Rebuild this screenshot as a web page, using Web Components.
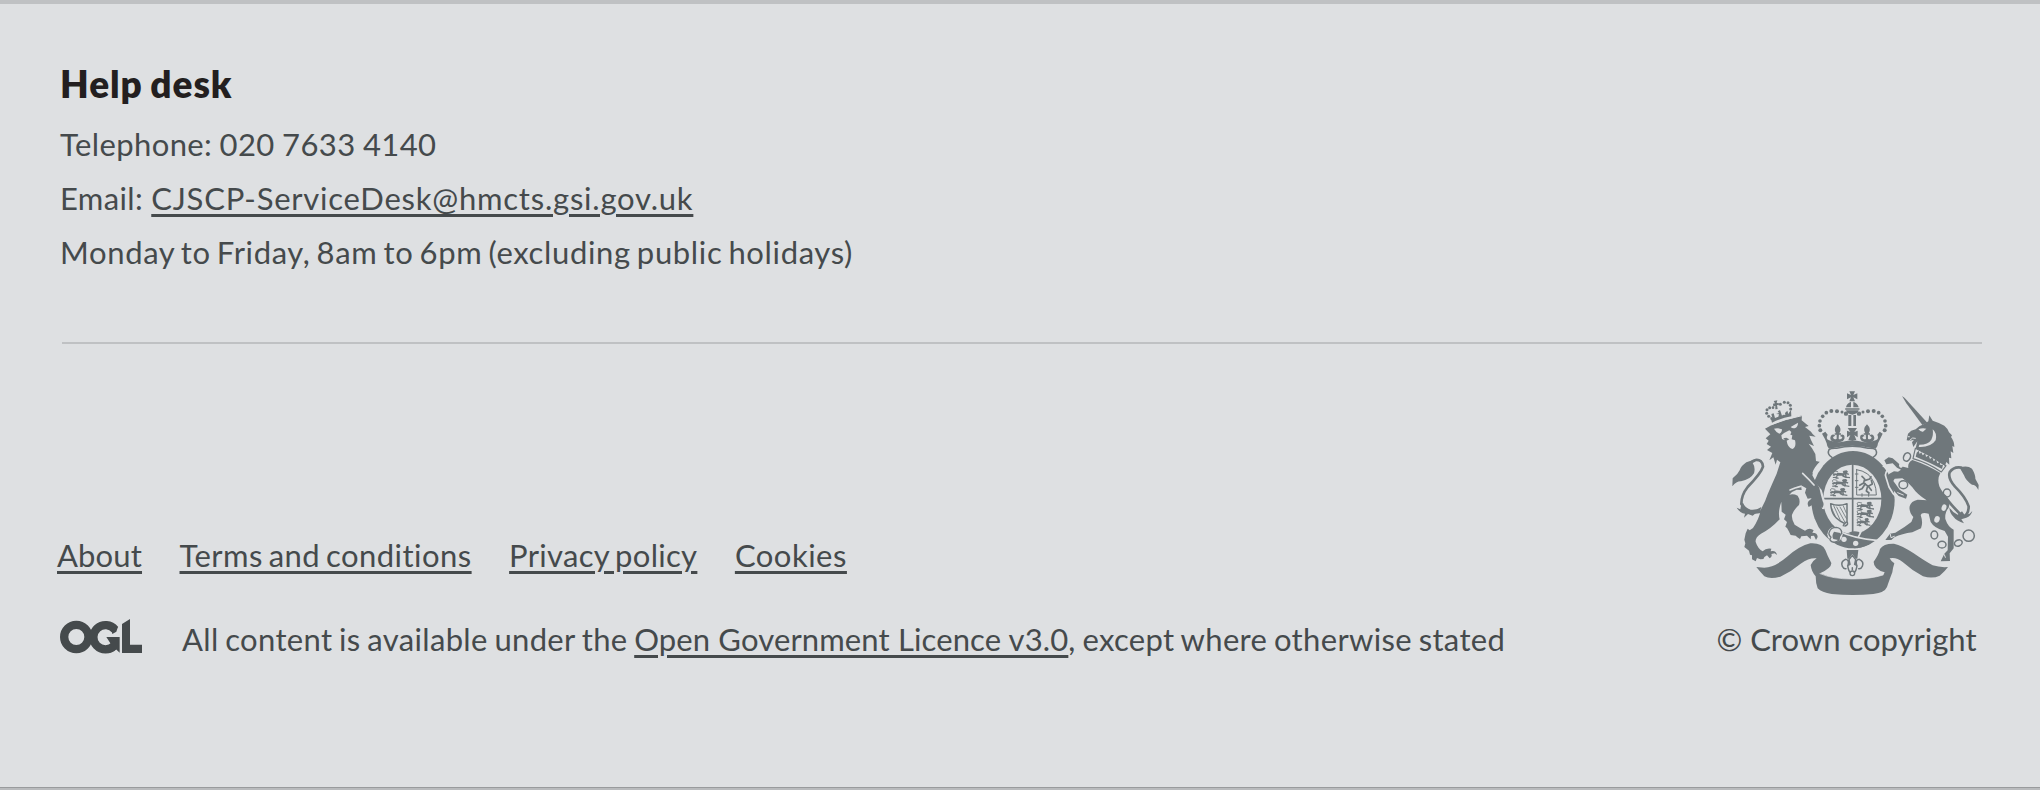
<!DOCTYPE html>
<html lang="en">
<head>
<meta charset="utf-8">
<title>Help desk</title>
<style>
  html, body { margin: 0; background: #dee0e2; }
  body { font: 31px/54px Lato, "Open Sans", sans-serif; color: #454a4c; }
</style>
</head>
<body>
<site-footer>
  <help-desk slot="help" heading="Help desk">
    <help-line style="letter-spacing:.4px;word-spacing:-1px">Telephone: 020 7633 4140</help-line>
    <help-line style="letter-spacing:.35px">Email: <text-link style="letter-spacing:.77px">CJSCP-ServiceDesk@hmcts.gsi.gov.uk</text-link></help-line>
    <help-line style="letter-spacing:.65px;word-spacing:-2.5px">Monday to Friday, 8am to 6pm (excluding public holidays)</help-line>
  </help-desk>
  <footer-links slot="meta">
    <text-link style="letter-spacing:.15px">About</text-link>
    <text-link style="letter-spacing:.45px;word-spacing:-2.5px">Terms and conditions</text-link>
    <text-link style="letter-spacing:.3px;word-spacing:-2.5px">Privacy policy</text-link>
    <text-link style="letter-spacing:.5px">Cookies</text-link>
  </footer-links>
  <licence-note slot="meta">All content is available under the <text-link style="letter-spacing:.13px;word-spacing:0">Open Government Licence v3.0</text-link>, except where otherwise stated</licence-note>
  <crown-copyright slot="copyright">© Crown copyright</crown-copyright>
</site-footer>

<template id="t-footer">
  <style>
    :host { display: flex; flex-direction: column; box-sizing: border-box; height: 790px;
      border-top: 4px solid #bfc1c3; background: #dee0e2; }
    .help { padding: 58px 0 63px 60px; }
    .lower { display: flex; justify-content: space-between; align-items: flex-end;
      margin: 0 58px 0 62px; border-top: 2px solid #bfc1c3; padding-top: 35px; }
    .meta { display: flex; flex-direction: column; gap: 30px; margin-left: -5px; }
    .end { margin-top: auto; height: 1px; border-bottom: 2px solid #b9bbbd; background: #999b9d; }
  </style>
  <div class="help"><slot name="help"></slot></div>
  <div class="lower">
    <div class="meta"><slot name="meta"></slot></div>
    <slot name="copyright"></slot>
  </div>
  <div class="end"></div>
</template>

<template id="t-help">
  <style>
    :host { display: block; }
    h2 { margin: 0 0 11px; font-size: 37px; line-height: 44px; font-weight: 800; letter-spacing: .95px; word-spacing: -2px; color: #231f20; }
  </style>
  <h2></h2><slot></slot>
</template>

<template id="t-logo">
  <style>:host { display: block; width: 82px; height: 35px; } svg { display: block; }</style>
  <svg width="82" height="35" viewBox="0 0 246 105" role="img">
    <g fill="none" stroke="#454a4c" stroke-width="25">
      <circle cx="49" cy="54" r="36.500"/>
      <path d="M165 32 A36.500 36.500 0 1 0 163 80"/>
    </g>
    <path fill="#454a4c" d="M139 54H179V101L168 91Q160 98 151 101L140 87Q149 84 153 76ZM186 15L210 0V77H246V102H186ZM155 36L174 23L169 38L157 45Z"/>
  </svg>
</template>

<template id="t-licence">
  <style>
    :host { display: flex; align-items: flex-start; white-space: nowrap; }
    ogl-logo { margin: 7px 40px 0 3px; }
    span { letter-spacing: .34px; word-spacing: -1.6px; }
  </style>
  <ogl-logo></ogl-logo><span><slot></slot></span>
</template>

<template id="t-crown">
  <style>
    :host { display: flex; flex-direction: column; align-items: center; width: 290px; margin-right: -18px; gap: 3px; }
    span { white-space: nowrap; margin-left: -17px; }
  </style>
  <royal-arms></royal-arms>
  <span><slot></slot></span>
</template>

<template id="t-arms">
  <style>
    :host { display: block; width: 290px; height: 230px; }
    svg { display: block; }
    .f { fill: #6f777b; } .b { fill: #dee0e2; }
    .s { fill: none; stroke: #6f777b; stroke-linecap: round; stroke-linejoin: round; }
    .k { fill: none; stroke: #dee0e2; stroke-linecap: round; stroke-linejoin: round; }
  </style>
  <svg width="290" height="230" viewBox="0 0 870 690">
    <defs>
      <g id="beast">
        <path class="f" d="M2 12L8 9L12 10L15 7L34 9L37 12L36 16L42 19L40 23L31 19L29 16L18 16L13 20L19 22V25H10L9 21L13 16L10 14L5 17L1 15ZM31 4L34 1L43 0L47 4L44 8L50 10L49 14L42 12L43 19L53 20V24L40 22L37 12L34 10ZM1 20L10 19V23H2Z"/>
        <path class="s" stroke-width="2.500" d="M4 10Q-1 2 8 2L16 4"/>
      </g>
      <g id="sidefleur">
        <path class="f" d="M383 136Q397 150 388 163H378Q369 150 383 136ZM380 164H387L386 179Q391 184 397 176Q395 170 390 172Q394 163 402 169Q407 179 398 187L383 191L368 188Q357 180 363 170Q370 163 376 171Q371 170 369 176Q374 184 380 179ZM374 163H393V167H374Z"/>
      </g>
    </defs>

    <!-- ribbon -->
    <path class="f" d="M139 564L163 566Q195 565 233 532Q268 501 301 493Q337 491 346 513Q352 530 364 552Q365 567 330 583Q370 601 427 600Q481 601 520 588L524 580Q490 571 491 548Q507 526 510 510Q521 493 552 494Q576 499 611 523Q644 546 668 559Q690 566 714 564Q705 577 689 590Q668 600 639 592Q607 575 578 549Q558 533 539 538Q544 548 553 553Q549 565 547 580Q536 609 531 624Q524 641 490 645Q430 651 365 645Q335 641 323 628Q317 613 317 592Q304 577 302 558Q306 547 320 538Q299 535 272 554Q245 577 211 593Q181 602 163 592Q151 579 139 564Z"/>
    <path class="k" stroke-width="2" d="M330 584Q367 600 427 600Q483 600 519 588"/>

    <!-- crown -->
    <path class="f" d="M418 37H435L430 48L442 43V61L430 55L435 67H418L423 55L411 61V43L423 48ZM408 85Q410 73 423 68V85ZM430 68Q443 73 446 85H430ZM408 94L446 94Q443 105 427 107Q411 105 408 94ZM415 108H424V141H415ZM430 108H438V141H430ZM413 147H441L433 159L443 155V175L433 168L439 183H415L421 168L411 175V155L421 159Z"/>
    <path class="s" stroke-width="4" d="M407 90H447"/>
    <g class="f" id="beads">
      <circle cx="408" cy="104" r="6.500"/><circle cx="396" cy="99" r="4.500"/><circle cx="381" cy="97" r="6"/><circle cx="364" cy="96" r="6"/><circle cx="349" cy="101" r="5.500"/><circle cx="338" cy="112" r="5.500"/><circle cx="330" cy="126" r="5.500"/><circle cx="328" cy="140" r="5.500"/><circle cx="331" cy="154" r="6"/>
    </g>
    <use href="#beads" transform="matrix(-1 0 0 1 855 0)"/>
    <use href="#sidefleur"/><use href="#sidefleur" transform="matrix(-1 0 0 1 854 0)"/>
    <path class="f" d="M336 164L346 158L353 167Q346 180 357 184Q383 194 405 187L427 183L449 187Q471 194 497 184Q508 180 502 167L509 158L518 164Q509 182 504 193Q504 201 497 209Q463 202 427 200Q391 202 357 209Q350 201 350 193Q345 178 336 164Z"/>
    <path class="s" stroke-width="4.500" d="M366 235Q350 226 357 212Q363 207 380 208Q427 195 474 208Q491 207 497 212Q505 226 489 235"/>

    <!-- garter and shield -->
    <ellipse class="f" cx="429" cy="362" rx="125" ry="146"/>
    <ellipse class="b" cx="427" cy="361" rx="87" ry="104"/>
    <path class="s" stroke-width="5" stroke-linecap="butt" d="M428 257V466M340 359H514"/>
    <g>
      <use href="#beast" x="367" y="274"/><use href="#beast" x="365" y="300"/><use href="#beast" x="359" y="327"/>
      <use href="#beast" x="439" y="368"/><use href="#beast" x="439" y="392"/><use href="#beast" transform="translate(439 417) scale(.8 1)"/>
    </g>
    <path class="s" stroke-width="3" d="M440 272V348H499Q499 308 473 285Q457 274 440 272ZM436 285H444M436 305H444M436 325H444M456 344V352M476 344V352"/>
    <path class="s" stroke-width="5" d="M456 292L464 300L461 312L475 322L484 334M461 312L449 319M466 314L456 329L448 332M473 321L469 336L477 342M466 304L479 300L483 293M475 322L487 315L484 304"/>
    <path class="s" stroke-width="4.500" d="M362 374Q386 384 411 374V428Q402 432 400 440M362 374Q364 403 379 417Q388 426 405 434M411 428Q416 438 405 441"/>
    <path class="s" stroke-width="2.500" d="M371 380L390 422M380 384L405 430M390 384L409 418M400 381L409 402M365 388L376 412"/>

    <!-- strap and buckle -->
    <path class="f" d="M388 455Q430 478 497 480Q471 506 434 508Q407 504 385 488Z"/>
    <path class="k" stroke-width="5" d="M386 456Q430 478 500 484M446 472L453 458"/>
    <path class="f" d="M415 462Q427 454 448 459L443 471Q428 469 415 462Z"/>
    <circle class="b" cx="375" cy="466" r="23"/>
    <path class="s" stroke-width="4" d="M358 459Q362 445 379 445Q395 447 395 462Q388 470 386 484Q377 493 365 488Q356 482 363 475Q354 466 358 459Z"/>
    <path class="f" d="M372 458L391 462L388 484L370 480Q364 470 372 458Z"/>
    <circle class="b" cx="402" cy="481" r="8"/><circle class="b" cx="437" cy="493" r="8"/>
    <path class="f" d="M410 513H445L442 539H437L427 525L417 539H412Z"/>
    <path class="s" stroke-width="4.500" d="M427 529L437 542L434 556L440 559Q435 542 448 541Q463 548 457 562Q454 570 446 569M427 529L417 542L420 556L414 559Q419 542 406 541Q391 548 397 562Q400 570 408 569M413 560Q416 578 421 580M441 560Q438 578 433 580M427 566V572"/>
    <circle class="s" stroke-width="4" cx="427" cy="583" r="7"/>

    <!-- lion -->
    <path class="k" stroke-width="9" d="M332 250Q306 270 301 300L331 335L340 365L340 386"/>
    <path class="f" d="M165 149L184 139Q212 125 243 119L276 109L275 124Q288 135 296 141L285 144L303 158Q307 166 317 173L298 170L303 183L312 201L296 194L306 208L316 225L318 246L331 249Q312 266 307 289Q316 307 328 326Q332 346 338 367Q344 376 337 387L330 378L327 389L319 378L310 386L308 377L296 384Q290 373 296 366L307 357L293 359L285 341L289 328L273 319L275 333L260 332L246 339L238 347Q250 343 263 350Q272 363 267 378Q252 391 246 407Q244 420 254 437Q273 449 285 455Q299 444 311 454L307 461Q323 461 323 474L318 483L312 470L303 471L302 481L291 470L274 472L270 480L262 475L257 470L242 468L236 456L231 447L226 443L231 429L222 421L227 407L215 398L214 368Q203 399 209 421Q181 451 153 464Q135 475 137 489Q144 510 158 517Q168 506 184 509L182 517Q198 513 201 528L194 523L184 525Q188 533 179 538L171 529Q159 535 161 540L151 541L141 537L137 547L126 541L126 529L120 527L117 515L103 504L106 493L103 482L107 463L113 449L119 454L129 447Q147 421 153 391Q167 366 173 346L186 316L200 284L211 250L201 242L197 257L190 235L178 244L187 222L171 213L183 203L170 195L176 185L167 178L181 166Z"/>
    <path class="b" d="M192 149Q203 145 216 151Q216 161 208 164Q197 158 192 149ZM242 144L264 131Q264 143 256 147Q247 149 242 144ZM214 169Q224 160 238 154L244 159L241 167L247 169L245 181L255 184Q260 204 247 210Q233 206 230 185L238 181L229 176L220 178L225 184L216 180Z"/>
    <path class="k" stroke-width="5" d="M278 283Q298 302 312 318M310 281Q314 266 332 249M240 333L255 327L272 322"/>
    <path class="k" stroke-width="3" d="M184 137Q230 118 276 110"/>
    <path class="s" stroke-width="8" d="M151 398Q114 407 94 375Q94 348 113 324Q153 283 159 263Q157 241 137 243Q122 248 110 263"/>
    <path class="f" d="M136 241L109 250Q93 261 89 274Q83 287 68 298L67 322Q80 306 93 307Q121 302 132 283Q137 265 128 252ZM80 386L91 391Q94 372 99 371Q104 386 122 392Q141 394 154 384L150 399Q137 400 128 410L114 405L102 416L105 404Q90 403 80 386Z"/>
    <g class="f"><circle cx="185" cy="119" r="4"/><circle cx="176" cy="112" r="4.500"/><circle cx="170" cy="103" r="4.500"/><circle cx="171" cy="92" r="4.500"/><circle cx="179" cy="86" r="4.500"/><circle cx="189" cy="86" r="4"/><circle cx="211" cy="76" r="4.500"/><circle cx="223" cy="70" r="4.500"/><circle cx="234" cy="71" r="4.500"/><circle cx="241" cy="79" r="4.500"/><circle cx="242" cy="90" r="4.500"/>
      <path d="M191 66L202 64L200 72L207 73L206 79L201 78L203 90L196 91L196 80L190 83L189 74L195 73ZM181 112L186 131Q212 117 244 112L243 93Q238 99 235 105L232 95L225 102L226 108Q219 106 216 110L210 93L203 97L207 102L198 105L207 106L205 113L195 117L191 103L184 105L187 117Z"/></g>

    <!-- unicorn -->
    <path class="k" stroke-width="5" d="M520 262L536 268Q524 282 527 292L537 324Q548 345 562 357"/>
    <path class="f" d="M576 51Q583 56 587 60L652 131L637 138L589 73Z"/>
    <path class="f" d="M590 184L594 164Q602 154 617 151L628 142L644 134L655 127L658 109L668 125Q690 132 703 140Q715 150 717 160L726 169L723 174Q733 187 733 204L727 201L730 222L722 217L724 238L717 236L718 257L709 249L705 260L661 232L617 208L622 187L610 204L606 190L612 182L600 185Z"/>
    <path class="b" d="M625 151Q636 146 649 149L639 158Q632 159 625 151ZM593 171L600 172L597 176ZM668 151Q682 162 677 184Q662 206 626 204L628 197Q655 197 664 182Q671 168 668 151Z"/>
    <path class="k" stroke-width="3" d="M599 184L608 177L616 178"/>
    <path class="s" stroke-width="3.500" d="M616 208Q661 229 708 260L694 279Q653 251 609 239Z"/>
    <path class="f" d="M620 221L626 215L629 225L634 220L638 229L646 223L648 234L656 229L660 240L667 234L671 247L678 241L682 253L690 248L691 258L699 257L696 270Q657 249 617 233Z"/>
    <path class="f" d="M607 243Q654 259 691 282Q681 300 688 322Q697 342 710 351Q722 369 716 386Q704 400 706 420Q714 444 731 452V508L719 523L720 546L692 547L703 524L713 514L714 473L704 456Q673 448 662 429L656 404Q635 398 632 408Q640 431 633 448L607 460Q576 464 553 475L544 483L526 483L540 464L556 461Q584 445 604 429L610 414Q596 398 599 382Q603 366 623 362Q641 363 650 364Q621 346 607 325Q593 308 577 298L554 299L550 306L569 332L592 347L588 359L566 351L553 337L541 318L532 295L537 285L552 277L564 278L573 272L561 266L548 253L539 254L529 256L523 244L536 235L548 238L560 248Q570 258 579 263L595 267Q592 252 607 243Z"/>
    <path class="k" stroke-width="3" d="M541 466L543 476L553 472M703 527L706 535M563 341L580 348"/>
    <path class="s" stroke-width="8" d="M711 361Q735 391 759 413Q776 407 776 382Q766 353 735 323Q713 298 719 280Q731 262 754 266"/>
    <path class="f" d="M749 266Q771 257 786 269Q797 288 796 299L806 318L805 333Q798 317 786 317Q768 306 762 289ZM718 385Q727 400 743 407L756 397L764 408L779 404L787 396Q783 412 769 416L754 421L762 433Q740 426 731 414Q719 403 718 385Z"/>
    <g class="s" stroke-width="4.500"><ellipse cx="591" cy="234" rx="10" ry="13" transform="rotate(25 591 234)"/><ellipse cx="580" cy="317" rx="13" ry="12"/><ellipse cx="711" cy="342" rx="11" ry="12"/><ellipse cx="673" cy="468" rx="10" ry="12"/><ellipse cx="696" cy="497" rx="12" ry="10"/><ellipse cx="745" cy="492" rx="12" ry="9" transform="rotate(-25 745 492)"/><circle cx="776" cy="470" r="17"/></g>
    <g class="b"><ellipse cx="573" cy="259" rx="6" ry="8"/><ellipse cx="702" cy="386" rx="7" ry="10" transform="rotate(20 702 386)"/><ellipse cx="681" cy="421" rx="8" ry="10" transform="rotate(20 681 421)"/></g>
  </svg>
</template>

<script>
  const stamp = (el, id) => {
    const root = el.attachShadow({ mode: 'open' });
    root.append(document.getElementById(id).content.cloneNode(true));
    return root;
  };
  const inline = (el, css) => { el.attachShadow({ mode: 'open' }).innerHTML = `<style>${css}</style><slot></slot>`; };

  customElements.define('text-link', class extends HTMLElement {
    constructor() {
      super();
      this.attachShadow({ mode: 'open' }).innerHTML = `<style>
        :host { display: inline; }
        a { color: inherit; white-space: nowrap; text-decoration: underline; text-decoration-thickness: 3px; text-underline-offset: 4px; }
      </style><a href="#"><slot></slot></a>`;
    }
  });
  customElements.define('help-line', class extends HTMLElement {
    constructor() { super(); inline(this, ':host{display:block;white-space:nowrap}'); }
  });
  customElements.define('footer-links', class extends HTMLElement {
    constructor() { super(); inline(this, ':host{display:flex;gap:37.500px;white-space:nowrap}'); }
  });
  customElements.define('help-desk', class extends HTMLElement {
    constructor() { super(); stamp(this, 't-help').querySelector('h2').textContent = this.getAttribute('heading'); }
  });
  customElements.define('ogl-logo', class extends HTMLElement { constructor() { super(); stamp(this, 't-logo'); } });
  customElements.define('royal-arms', class extends HTMLElement { constructor() { super(); stamp(this, 't-arms'); } });
  customElements.define('licence-note', class extends HTMLElement { constructor() { super(); stamp(this, 't-licence'); } });
  customElements.define('crown-copyright', class extends HTMLElement { constructor() { super(); stamp(this, 't-crown'); } });
  customElements.define('site-footer', class extends HTMLElement { constructor() { super(); stamp(this, 't-footer'); } });
</script>
</body>
</html>
